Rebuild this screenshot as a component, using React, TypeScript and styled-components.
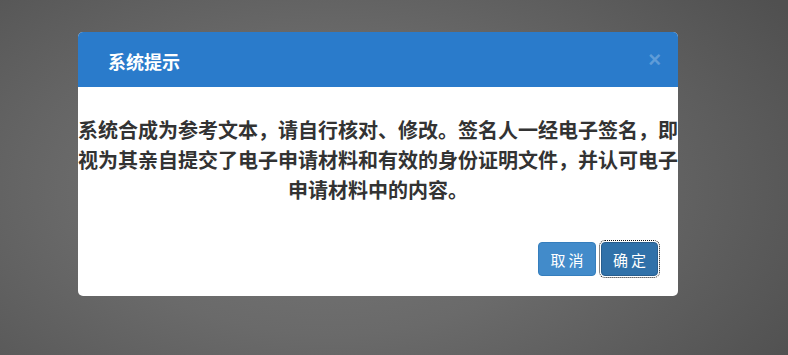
import styled, { createGlobalStyle } from "styled-components";

const GlobalStyle = createGlobalStyle`
  html, body {
    margin: 0;
    padding: 0;
  }
  body {
    font-family: "Noto Sans CJK SC", "Liberation Sans", sans-serif;
  }
`;

function App() {
  return (
    <>
      <GlobalStyle />
      <Backdrop>
        <Dialog>
          <Header>
            <Title>系统提示</Title>
            <CloseButton aria-label="关闭">×</CloseButton>
          </Header>
          <Body>
            系统合成为参考文本，请自行核对、修改。签名人一经电子签名，即视为其亲自提交了电子申请材料和有效的身份证明文件，并认可电子申请材料中的内容。
          </Body>
          <Footer>
            <Button>取消</Button>
            <Button $primary>确定</Button>
          </Footer>
        </Dialog>
      </Backdrop>
    </>
  );
}

export default App;

const Backdrop = styled.div`
  width: 788px;
  height: 355px;
  box-sizing: border-box;
  padding: 32px 0 0 78px;
  background: radial-gradient(
    ellipse 70% 90% at 330px 190px,
    #777777 0%,
    #6a6a6a 45%,
    #505050 100%
  );
  overflow: hidden;
`;

const Dialog = styled.div`
  width: 600px;
  background: #ffffff;
  border-radius: 5px;
  overflow: hidden;
  display: flex;
  flex-direction: column;
`;

const Header = styled.div`
  height: 55px;
  background: #2a7bcb;
  display: flex;
  align-items: center;
  justify-content: space-between;
  padding: 0 17px 0 30px;
`;

const Title = styled.div`
  color: #ffffff;
  font-size: 18px;
  font-weight: bold;
  margin-top: 2px;
`;

const CloseButton = styled.div`
  color: rgba(255, 255, 255, 0.25);
  font-family: "Liberation Sans", sans-serif;
  font-size: 22px;
  font-weight: bold;
  line-height: 1;
  cursor: pointer;
`;

const Body = styled.div`
  padding-top: 28px;
  font-size: 20px;
  line-height: 30px;
  font-weight: bold;
  color: #333333;
  text-align: center;
`;

const Footer = styled.div`
  display: flex;
  justify-content: flex-end;
  gap: 5px;
  padding: 37px 20px 20px 0;
`;

const Button = styled.button<{ $primary?: boolean }>`
  height: 34px;
  width: ${(p) => (p.$primary ? "57px" : "58px")};
  box-sizing: border-box;
  font-family: "Noto Sans CJK SC", sans-serif;
  font-size: 15px;
  letter-spacing: 3px;
  text-indent: 3px;
  color: #ffffff;
  border-radius: 4px;
  border: 1px solid ${(p) => (p.$primary ? "#285e8e" : "#357ebd")};
  background: ${(p) => (p.$primary ? "#3071a9" : "#428bca")};
  outline: ${(p) => (p.$primary ? "1px dotted #111" : "none")};
  outline-offset: 1px;
  padding: 0;
  cursor: pointer;
`;
